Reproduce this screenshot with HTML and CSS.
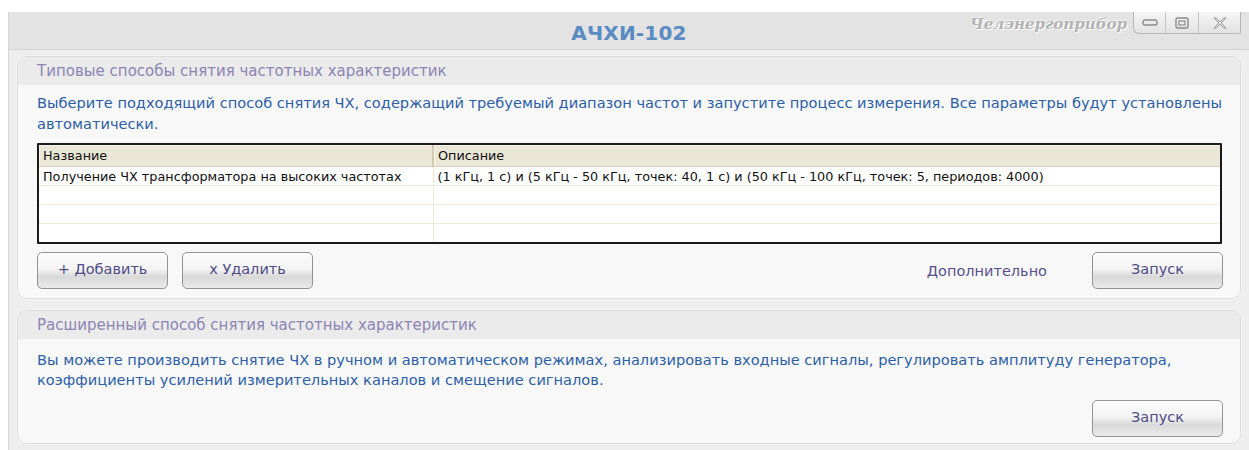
FILE: index.html
```html
<!DOCTYPE html>
<html lang="ru">
<head>
<meta charset="utf-8">
<title>АЧХИ-102</title>
<link rel="stylesheet" href="styles.css">
</head>
<body>
<div class="window">
  <header class="titlebar">
    <div class="titlebar-side"></div>
    <h1 class="app-title">АЧХИ-102</h1>
    <div class="titlebar-side titlebar-right">
      <span class="brand">Челэнергоприбор</span>
      <div class="win-buttons">
        <button class="win-btn win-min" aria-label="Свернуть">
          <svg width="16" height="8" viewBox="0 0 16 8"><rect x="1" y="1" width="14" height="5" rx="2" fill="none" stroke="#8a8a8a" stroke-width="1.4"/></svg>
        </button>
        <button class="win-btn win-max" aria-label="Развернуть">
          <svg width="14" height="12" viewBox="0 0 14 12"><rect x="1" y="1" width="12" height="10" rx="1.5" fill="none" stroke="#8a8a8a" stroke-width="1.4"/><rect x="4" y="4" width="6" height="4" fill="none" stroke="#8a8a8a" stroke-width="1.2"/></svg>
        </button>
        <button class="win-btn win-close" aria-label="Закрыть">
          <svg width="14" height="12" viewBox="0 0 14 12"><path d="M2 1 L12 11 M12 1 L2 11" stroke="#9a9a9a" stroke-width="2.4" stroke-linecap="round"/><path d="M2 1 L12 11 M12 1 L2 11" stroke="#ffffff" stroke-width="0.8" stroke-linecap="round"/></svg>
        </button>
      </div>
    </div>
  </header>

  <main class="content">
    <section class="panel">
      <h2 class="panel-head">Типовые способы снятия частотных характеристик</h2>
      <div class="panel-body body-first">
        <p class="lead">Выберите подходящий способ снятия ЧХ, содержащий требуемый диапазон частот и запустите процесс измерения. Все параметры будут установлены автоматически.</p>
        <div class="grid-box">
          <table class="grid">
            <colgroup><col class="col-name"><col></colgroup>
            <thead>
              <tr><th>Название</th><th>Описание</th></tr>
            </thead>
            <tbody>
              <tr><td>Получение ЧХ трансформатора на высоких частотах</td><td>(1 кГц, 1 с) и (5 кГц - 50 кГц, точек: 40, 1 с) и (50 кГц - 100 кГц, точек: 5, периодов: 4000)</td></tr>
              <tr><td></td><td></td></tr>
              <tr><td></td><td></td></tr>
              <tr class="last"><td></td><td></td></tr>
            </tbody>
          </table>
        </div>
        <div class="actions">
          <button class="btn">+ Добавить</button>
          <button class="btn">х Удалить</button>
          <span class="spacer"></span>
          <a class="link">Дополнительно</a>
          <button class="btn">Запуск</button>
        </div>
      </div>
    </section>

    <section class="panel">
      <h2 class="panel-head">Расширенный способ снятия частотных характеристик</h2>
      <div class="panel-body body-second">
        <p class="lead">Вы можете производить снятие ЧХ в ручном и автоматическом режимах, анализировать входные сигналы, регулировать амплитуду генератора, коэффициенты усилений измерительных каналов и смещение сигналов.</p>
        <div class="actions actions-end">
          <button class="btn">Запуск</button>
        </div>
      </div>
    </section>
  </main>
</div>
</body>
</html>
```
FILE: styles.css
```css
html, body {
  margin: 0;
  padding: 0;
  background: #ffffff;
  height: 450px;
  overflow: hidden;
}

body {
  padding: 12px 0 0 8px;
  font-family: "DejaVu Sans", Verdana, sans-serif;
}

.window {
  width: 1241px;
  height: 438px;
  background: #eeeeee;
  border-left: 1px solid #d6d6d6;
  box-sizing: border-box;
}

/* title bar */
.titlebar {
  height: 38px;
  background: #e3e3e3;
  border-bottom: 1px solid #d2d2d2;
  box-sizing: border-box;
  display: grid;
  grid-template-columns: 1fr auto 1fr;
  align-items: start;
}

.app-title {
  margin: 0;
  padding-top: 9px;
  font-size: 20px;
  font-weight: bold;
  color: #5b8bc2;
  letter-spacing: 0.2px;
  line-height: 24px;
}

.titlebar-right {
  display: flex;
  justify-content: flex-end;
  align-items: flex-start;
}

.brand {
  margin-top: 3px;
  margin-right: 6px;
  font-family: "DejaVu Serif", serif;
  font-style: italic;
  font-weight: bold;
  font-size: 15px;
  color: #b2b2b2;
  text-shadow: 1px 1px 0 #ffffff, -1px -1px 0 #f4f4f4;
  letter-spacing: 0;
}

.win-buttons {
  display: flex;
  height: 21px;
  margin-right: 8px;
  border: 1px solid #b8b8b8;
  border-top: 0;
  border-radius: 0 0 2px 6px;
  background: linear-gradient(#f6f6f6, #e2e2e2);
}

.win-btn {
  border: 0;
  padding: 0;
  background: transparent;
  display: flex;
  align-items: center;
  justify-content: center;
}

.win-min { width: 32px; border-right: 1px solid #c4c4c4; }
.win-max { width: 33px; border-right: 1px solid #c4c4c4; }
.win-close { width: 41px; }

/* content area */
.content {
  padding: 6px 8px 0 8px;
  display: flex;
  flex-direction: column;
  gap: 11px;
}

.panel {
  background: #f8f8f8;
  border: 1px solid #dcdcdc;
  border-radius: 9px;
  box-shadow: 0 0 0 1px #f4f4f4;
  overflow: hidden;
}

.panel-head {
  margin: 0;
  height: 28px;
  line-height: 28px;
  padding-left: 19px;
  background: #ebebeb;
  font-weight: normal;
  font-size: 15px;
  color: #8c84b3;
}

.panel-body {
  padding: 7px 17px 9px 19px;
}

.body-second {
  padding-top: 11px;
  padding-bottom: 6px;
}

.lead {
  margin: 0;
  font-size: 14.6px;
  line-height: 21px;
  color: #2d5ea6;
}

.body-second .lead {
  line-height: 20px;
}

/* grid */
.grid-box {
  margin-top: 9px;
  border: 2px solid #1a1a1a;
  border-radius: 1px;
  background: #ffffff;
  width: 1185px;
  box-sizing: border-box;
}

.grid {
  width: 100%;
  border-collapse: collapse;
  table-layout: fixed;
  font-size: 12.8px;
  color: #111111;
}

.col-name { width: 394px; }

.grid th {
  height: 21px;
  padding: 0 0 0 4px;
  text-align: left;
  font-weight: normal;
  background: #ebe7d6;
  border-bottom: 1px solid #d6d0b8;
  border-right: 2px solid #cfc9b0;
  box-shadow: inset 1px 1px 0 #f7f5ec;
}

.grid th:last-child { border-right: 0; }

.grid td {
  height: 18px;
  padding: 0 0 0 4px;
  border-bottom: 1px solid #efe9d6;
  border-right: 1px solid #efe9d6;
  white-space: nowrap;
}

.grid td:last-child { border-right: 0; }
.grid tr.last td { border-bottom: 0; height: 18px; }

/* buttons */
.actions {
  display: flex;
  align-items: center;
  gap: 14px;
  margin-top: 8px;
}

.actions-end {
  justify-content: flex-end;
  margin-top: 10px;
}

.spacer { flex: 1; }

.btn {
  width: 131px;
  height: 37px;
  box-sizing: border-box;
  border: 1px solid #939393;
  border-radius: 5px;
  background: linear-gradient(#fbfbfb 0%, #f4f4f4 45%, #d9d9d9 68%, #eaeaea 100%);
  font-family: "DejaVu Sans", Verdana, sans-serif;
  font-size: 14.5px;
  color: #4e4a86;
  padding: 0 0 4px 0;
  box-shadow: inset 0 1px 0 #ffffff;
}

.link {
  font-size: 14.5px;
  color: #574f8c;
  margin-right: 31px;
}
```
